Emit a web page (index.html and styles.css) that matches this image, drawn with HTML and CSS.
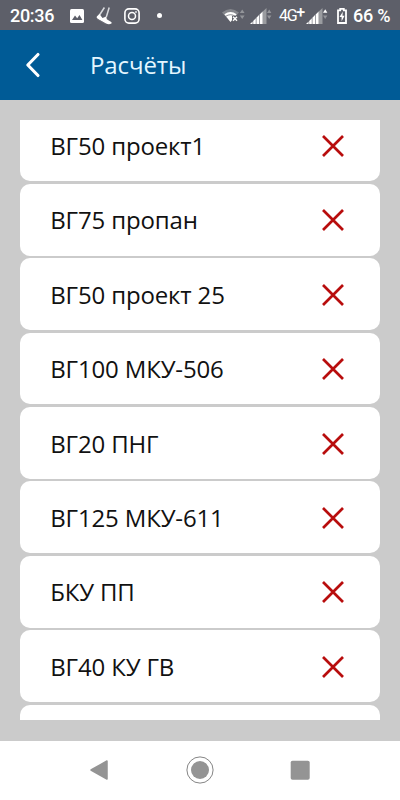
FILE: index.html
```html
<!DOCTYPE html>
<html lang="ru">
<head>
<meta charset="utf-8">
<title>Расчёты</title>
<link rel="stylesheet" href="styles.css">
</head>
<body>
<svg width="0" height="0" class="defs">
  <symbol id="cross" viewBox="0 0 24 24"><path d="M2 2 22 22M22 2 2 22" fill="none" stroke="#b80d0d" stroke-width="2.7"/></symbol>
  <symbol id="signal" viewBox="0 0 22 16"><path d="M16.5 0V16H12.5V3.8z" fill="#9a9ca0"/><path d="M0 16 2.6 13.4V16zM3.2 12.9 5.8 10.3V16H3.2zM6.4 9.7 9 7.1V16H6.4zM9.6 6.5 12.6 3.5V16h-3z" fill="#fff"/></symbol>
</svg>
<div class="phone">
  <header class="status">
    <span class="clock">20:36</span>
    <svg class="photo" width="14" height="14" viewBox="0 0 14 14"><rect width="14" height="14" rx="1.5" fill="#fff"/><path d="M2 11 5 6.5 7.2 9.2 9.5 6 12.4 11z" fill="#5c5e68"/></svg>
    <svg class="shoe" width="17" height="18" viewBox="0 0 17 18"><path d="M8.4 .5 3.2 8.5M13.2 .5 10.3 10" stroke="#d8dadd" stroke-width="1.5" fill="none"/><path d="M3.4 7 .8 9.4Q0 10.8 2 12L10 16.5Q13 18 15.5 16.5 16.4 15 14 14.2L10.8 12.3 10.3 9.5 6.5 11z" fill="#fff"/><path d="M1 12 9.5 17" stroke="#73757d" stroke-width=".6"/></svg>
    <svg class="camera" width="16" height="16" viewBox="0 0 16 16" fill="none" stroke="#fff"><rect x=".9" y=".9" width="14.2" height="14.2" rx="4" stroke-width="1.6"/><circle cx="8" cy="8" r="3.5" stroke-width="1.5"/><circle cx="12" cy="4" r=".7" fill="#fff" stroke-width=".4"/></svg>
    <span class="dot"></span>
    <svg class="wifi" width="23" height="16" viewBox="0 0 23 16"><path d="M0 4.5Q8.5-2.5 17 4.5L8.5 14z" fill="#85878d"/><path d="M2.4 6.3Q8.5 1.6 14.6 6.3L8.5 14z" fill="#fff"/><path d="M3.5 8.4Q8.5 5 13.5 8.4" fill="none" stroke="#5e6068" stroke-width=".7"/><path d="M10 7.8h7v6.4h-7z" fill="#5e6068"/><path d="M11 8.8 15 12.8M15 8.8 11 12.8" stroke="#fff" stroke-width="1.4"/><path d="M17.8 5 20.2 1.5 22.6 5zM17.8 7.4H22.6L20.2 11z" fill="#93959a"/></svg>
    <svg class="bars first" width="22" height="16"><use href="#signal"/><path d="M17 5 19.2 1.5 21.4 5zM17 7.4h4.4L19.2 11z" fill="#93959a"/></svg>
    <span class="network">4G<sup>+</sup></span>
    <svg class="bars second" width="22" height="16"><use href="#signal"/><path d="M17 4.7 19.2 1.2 21.4 4.7z" fill="#fff"/><path d="M17 7.4h4.4L19.2 11z" fill="#93959a"/></svg>
    <svg class="battery" width="10" height="16" viewBox="0 0 10 16"><path d="M1 2.4h2.2V.9h3.6v1.5H9V15H1z" fill="none" stroke="#fff" stroke-width="1.8"/><path d="M5.8 3.7 2.5 9H4.6V13.3L7.6 7.8H5.5z" fill="#fff"/></svg>
    <span class="percent">66 %</span>
  </header>
  <nav class="titlebar">
    <svg width="16" height="26" viewBox="0 0 16 26"><path d="M13 2.5 2.8 13 13 23.5" fill="none" stroke="#fff" stroke-width="3.1" stroke-linecap="round" stroke-linejoin="round"/></svg>
    <h1>Расчёты</h1>
  </nav>
  <main>
    <div class="viewport">
      <ul class="list">
        <li><span>ВГ50 проект1</span><svg><use href="#cross"/></svg></li>
        <li><span>ВГ75 пропан</span><svg><use href="#cross"/></svg></li>
        <li><span>ВГ50 проект 25</span><svg><use href="#cross"/></svg></li>
        <li><span>ВГ100 МКУ-506</span><svg><use href="#cross"/></svg></li>
        <li><span>ВГ20 ПНГ</span><svg><use href="#cross"/></svg></li>
        <li><span>ВГ125 МКУ-611</span><svg><use href="#cross"/></svg></li>
        <li><span>БКУ ПП</span><svg><use href="#cross"/></svg></li>
        <li><span>ВГ40 КУ ГВ</span><svg><use href="#cross"/></svg></li>
        <li></li>
      </ul>
    </div>
  </main>
  <footer class="navbar">
    <svg width="18" height="20" viewBox="0 0 18 20"><path d="M17 1V19L1 10z" fill="#949494" stroke="#949494" stroke-width="1.5" stroke-linejoin="round"/></svg>
    <svg width="28" height="28" viewBox="0 0 28 28"><circle cx="14" cy="14" r="13.1" fill="none" stroke="#858585" stroke-width="1"/><circle cx="14" cy="14" r="9" fill="#949494"/></svg>
    <svg width="20" height="20" viewBox="0 0 20 20"><rect x=".7" y=".7" width="19" height="19" rx="1.8" fill="#949494"/></svg>
  </footer>
</div>
</body>
</html>
```
FILE: styles.css
```css
* { box-sizing: border-box; }
body { margin: 0; font-family: "Open Sans", "Noto Sans", sans-serif; }
svg { display: block; flex: none; }
.defs { position: absolute; }
.phone { width: 400px; height: 800px; display: flex; flex-direction: column; overflow: hidden; background: #fff; }
.status { height: 30px; flex: none; display: flex; align-items: center; padding-top: 1px; background: #5d5f69; color: #fff; font-family: Roboto, sans-serif; white-space: nowrap; }
.clock { width: 60px; padding-left: 10px; font-size: 18px; font-weight: 500; letter-spacing: -0.3px; }
.photo { margin-left: 10px; }
.shoe { margin-left: 12px; }
.camera { margin-left: 11px; }
.dot { width: 5px; height: 5px; border-radius: 50%; background: #fff; margin-left: 17px; }
.wifi { margin-left: 60px; }
.bars { overflow: visible; }
.first { margin-left: 5px; }
.network { width: 27px; margin-left: 7px; font-size: 16px; letter-spacing: -1.3px; }
.network sup { font-size: 16px; line-height: 0; vertical-align: 3px; font-weight: 500; }
.second { margin-left: 0; }
.battery { margin-left: 9px; }
.percent { margin-left: 6px; font-size: 18px; font-weight: 500; letter-spacing: -0.2px; }
.titlebar { height: 70px; flex: none; display: flex; align-items: center; padding-left: 25px; background: #005b96; color: #e4f6ff; }
h1 { margin: 0 0 0 49px; font-size: 24px; font-weight: 400; letter-spacing: -0.1px; line-height: 32px; }
main { height: 640.5px; flex: none; padding: 20px; background: #cbcbcb; }
.viewport { height: 600px; overflow: hidden; }
.list { list-style: none; margin: -10.6px 0 0; padding: 0; display: flex; flex-direction: column; gap: 2.6px; }
li { height: 71.8px; flex: none; display: flex; align-items: center; justify-content: space-between; padding: 1.4px 35.5px 0 30.2px; border-radius: 10px; background: #fff; color: #111; font-size: 24px; font-weight: 400; letter-spacing: -0.14px; line-height: 32px; }
li svg { width: 24px; height: 24px; }
.navbar { flex: 1; display: flex; align-items: center; padding-left: 90px; }
.navbar svg:nth-child(2) { margin-left: 78px; }
.navbar svg:nth-child(3) { margin-left: 76px; }
```
